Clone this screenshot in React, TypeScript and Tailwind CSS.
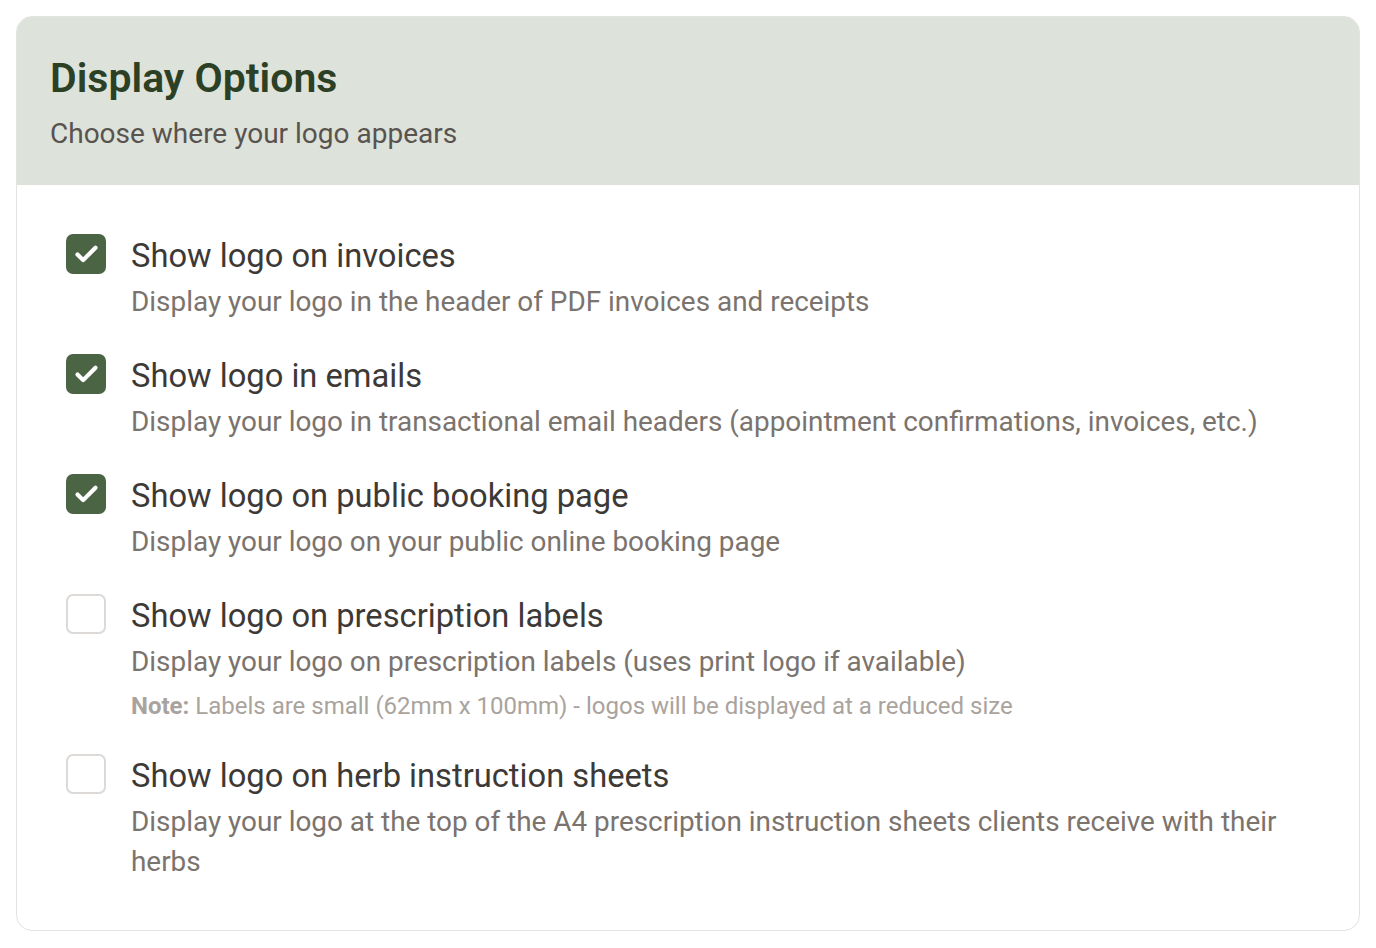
import { Check } from "lucide-react";

type Option = {
  label: string;
  description: string;
  checked: boolean;
  note?: string;
};

const options: Option[] = [
  {
    label: "Show logo on invoices",
    description: "Display your logo in the header of PDF invoices and receipts",
    checked: true,
  },
  {
    label: "Show logo in emails",
    description:
      "Display your logo in transactional email headers (appointment confirmations, invoices, etc.)",
    checked: true,
  },
  {
    label: "Show logo on public booking page",
    description: "Display your logo on your public online booking page",
    checked: true,
  },
  {
    label: "Show logo on prescription labels",
    description: "Display your logo on prescription labels (uses print logo if available)",
    checked: false,
    note: "Labels are small (62mm x 100mm) - logos will be displayed at a reduced size",
  },
  {
    label: "Show logo on herb instruction sheets",
    description:
      "Display your logo at the top of the A4 prescription instruction sheets clients receive with their herbs",
    checked: false,
  },
];

function OptionRow({ option }: { option: Option }) {
  return (
    <label className="flex items-start gap-[25px]">
      <span
        className={
          option.checked
            ? "flex size-10 shrink-0 items-center justify-center rounded-[7px] bg-[#4b6544]"
            : "size-10 shrink-0 rounded-[7px] border-2 border-[#dcd9d6] bg-white"
        }
      >
        {option.checked && <Check className="size-[27px] text-white" strokeWidth={3.75} />}
      </span>
      <div className="min-w-0">
        <div className="text-[32.7px] leading-[45px] text-[#3d3936]">{option.label}</div>
        <p className="mt-[3px] text-[27.9px] leading-[40px] text-[#7b736d]">{option.description}</p>
        {option.note && (
          <p className="mt-2 text-[24px] leading-[32px] text-[#aaa39d]">
            <span className="font-bold">Note:</span> {option.note}
          </p>
        )}
      </div>
    </label>
  );
}

export default function App() {
  return (
    <div className="min-h-screen bg-white p-4 font-['Roboto',sans-serif]">
      <div className="overflow-hidden rounded-2xl border border-[#e3e3e1] bg-white">
        <div className="bg-[#dde2da] px-[33px] pt-[39px] pb-[31px]">
          <h2 className="text-[41px] font-semibold leading-[45px] text-[#2b4024]">Display Options</h2>
          <p className="mt-[13px] text-[28px] leading-[40px] text-[#58534f]">
            Choose where your logo appears
          </p>
        </div>
        <div className="flex flex-col gap-8 px-[49px] pt-[49px] pb-[48px]">
          {options.map((o) => (
            <OptionRow key={o.label} option={o} />
          ))}
        </div>
      </div>
    </div>
  );
}
